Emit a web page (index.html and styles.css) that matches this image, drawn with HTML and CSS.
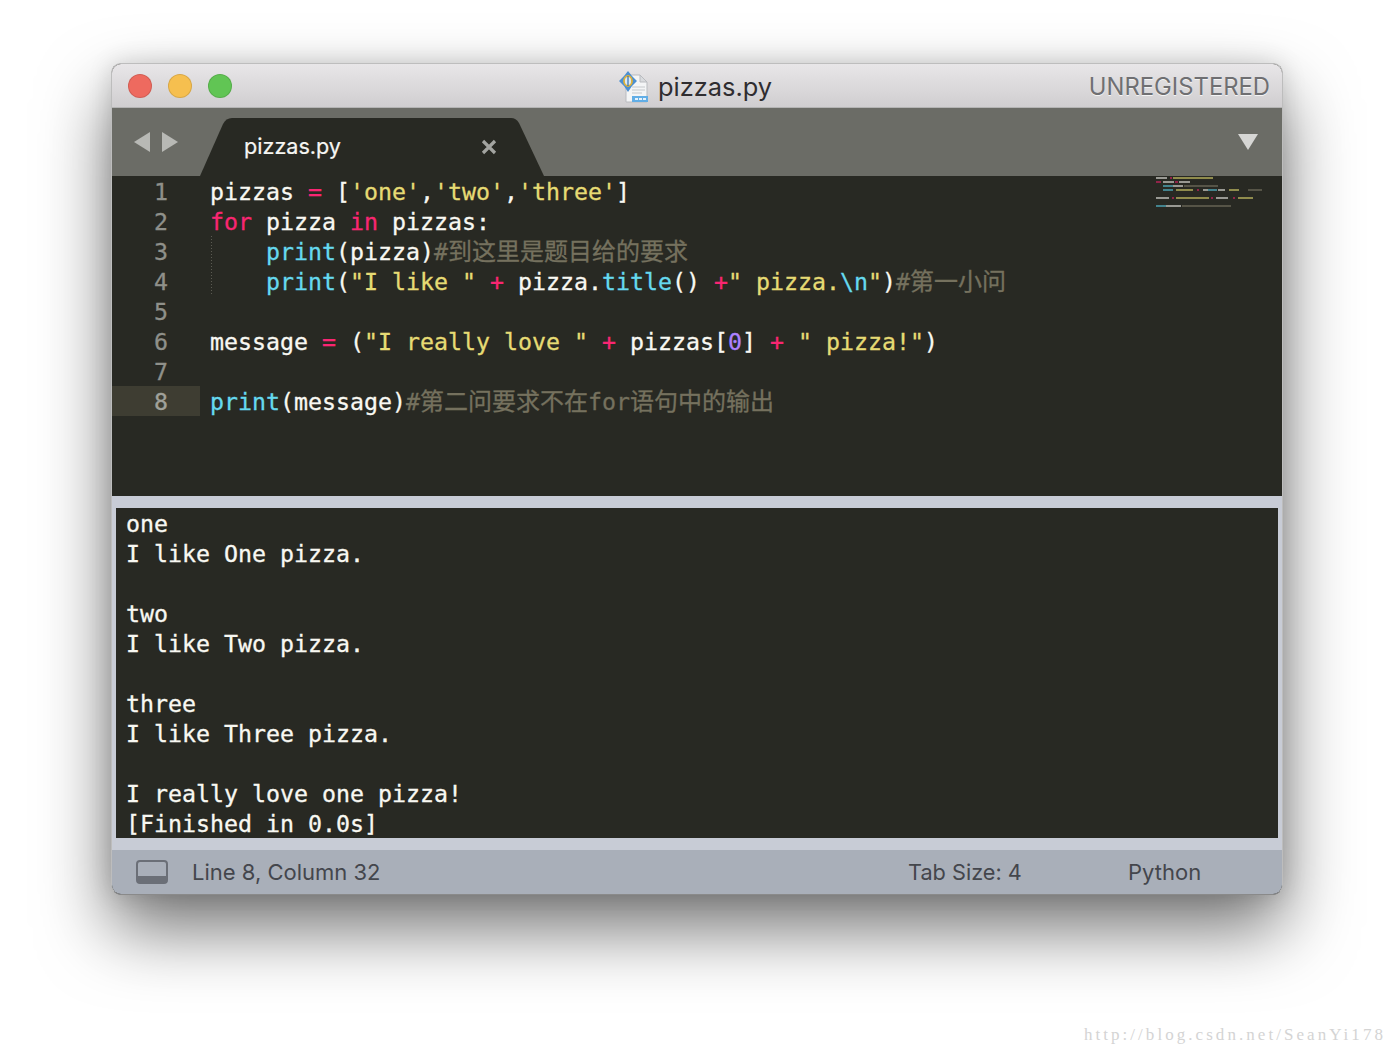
FILE: index.html
```html
<!DOCTYPE html>
<html lang="en">
<head>
<meta charset="utf-8">
<title>pizzas.py</title>
<link rel="stylesheet" href="styles.css">
</head>
<body>
<div class="window">
  <header class="titlebar">
    <div class="lights">
      <span class="light red"></span><span class="light yellow"></span><span class="light green"></span>
    </div>
    <div class="title">
      <svg class="file-icon" width="34" height="34" viewBox="0 0 34 34">
        <path d="M9 5h14l7 7v20H9z" fill="#f4f5f6" stroke="#b9bbbf"/>
        <path d="M23 5v7h7z" fill="#d9dbde" stroke="#b9bbbf"/>
        <path d="M15 17h13M15 20h13M15 23h10" stroke="#d5d7da" stroke-width="1.5"/>
        <rect x="15" y="26" width="16" height="6" fill="#62aee6"/>
        <path d="M18 29h11" stroke="#e6f2fb" stroke-width="2" stroke-dasharray="3 1"/>
        <path d="M11 1l4 5 5 5-5 5-4 6-4-6-5-5 5-5z" fill="#4b8fd2"/>
        <ellipse cx="11" cy="11" rx="4" ry="5" fill="#dbe8f2" stroke="#dfb23a" stroke-width="1.800"/>
        <path d="M11 6v10" stroke="#2f6fb0" stroke-width="1.200"/>
      </svg>
      <span class="title-text">pizzas.py</span>
    </div>
    <span class="unregistered">UNREGISTERED</span>
  </header>

  <nav class="tabbar">
    <div class="nav-arrows">
      <svg width="16" height="20" viewBox="0 0 16 20"><path d="M16 0v20L0 10z" fill="#b8b9b5"/></svg>
      <svg width="16" height="20" viewBox="0 0 16 20"><path d="M0 0v20l16-10z" fill="#b8b9b5"/></svg>
    </div>
    <div class="tab">
      <span class="tab-name">pizzas.py</span>
      <svg class="tab-close" width="16" height="16" viewBox="0 0 16 16"><path d="M2 2l12 12M14 2L2 14" stroke="#a3a4a0" stroke-width="3.200"/></svg>
    </div>
    <svg class="tab-menu" width="20" height="16" viewBox="0 0 20 16"><path d="M0 0h20L10 16z" fill="#d6d6d4"/></svg>
  </nav>

  <main class="editor">
    <div class="gutter">
      <div class="ln">1</div><div class="ln">2</div><div class="ln">3</div><div class="ln">4</div>
      <div class="ln">5</div><div class="ln">6</div><div class="ln">7</div><div class="ln current">8</div>
    </div>
    <div class="code">
      <div class="line">pizzas <b class="kw">=</b> [<b class="str">'one'</b>,<b class="str">'two'</b>,<b class="str">'three'</b>]</div>
      <div class="line"><b class="kw">for</b> pizza <b class="kw">in</b> pizzas:</div>
      <div class="line guide">    <b class="fn">print</b>(pizza)<b class="cm">#<i>到这里是题目给的要求</i></b></div>
      <div class="line guide">    <b class="fn">print</b>(<b class="str">"I like "</b> <b class="kw">+</b> pizza.<b class="fn">title</b>() <b class="kw">+</b><b class="str">" pizza.</b><b class="fn">\n</b><b class="str">"</b>)<b class="cm">#<i>第一小问</i></b></div>
      <div class="line"></div>
      <div class="line">message <b class="kw">=</b> (<b class="str">"I really love "</b> <b class="kw">+</b> pizzas[<b class="num">0</b>] <b class="kw">+</b> <b class="str">" pizza!"</b>)</div>
      <div class="line"></div>
      <div class="line"><b class="fn">print</b>(message)<b class="cm">#<i>第二问要求不在</i>for<i>语句中的输出</i></b></div>
    </div>
    <svg class="minimap" width="110" height="36" viewBox="0 0 110 36" aria-hidden="true">
      <g fill="#c9c9c3"><rect x="0" y="0" width="11" height="2"/><rect x="7" y="4" width="11" height="2"/><rect x="23" y="4" width="11" height="2"/><rect x="17" y="8" width="10" height="2"/><rect x="47" y="12" width="12" height="2"/><rect x="62" y="12" width="7" height="2"/><rect x="0" y="20" width="13" height="2"/><rect x="60" y="20" width="12" height="2"/><rect x="10" y="28" width="15" height="2"/></g>
      <g fill="#bdb660"><rect x="17" y="0" width="40" height="2"/><rect x="20" y="12" width="17" height="2"/><rect x="73" y="12" width="10" height="2"/><rect x="20" y="20" width="33" height="2"/><rect x="82" y="20" width="15" height="2"/></g>
      <g fill="#c0225a"><rect x="0" y="4" width="5" height="2"/><rect x="19" y="4" width="3" height="2"/><rect x="14" y="0" width="2" height="2"/><rect x="41" y="12" width="2" height="2"/><rect x="16" y="20" width="2" height="2"/><rect x="55" y="20" width="2" height="2"/><rect x="77" y="20" width="2" height="2"/></g>
      <g fill="#4fa9ba"><rect x="7" y="8" width="10" height="2"/><rect x="7" y="12" width="10" height="2"/><rect x="52" y="12" width="9" height="2"/><rect x="0" y="28" width="10" height="2"/></g>
      <g fill="#6a6757"><rect x="28" y="8" width="34" height="2"/><rect x="92" y="12" width="14" height="2"/><rect x="26" y="28" width="49" height="2"/></g>
    </svg>
  </main>

  <div class="panel-wrap">
    <pre class="output">one
I like One pizza.

two
I like Two pizza.

three
I like Three pizza.

I really love one pizza!
[Finished in 0.0s]</pre>
  </div>

  <footer class="statusbar">
    <svg class="panel-icon" width="32" height="24" viewBox="0 0 32 24">
      <rect x="1" y="1" width="30" height="22" rx="3" fill="none" stroke="#6b6f77" stroke-width="2"/>
      <path d="M1 16h30v4a3 3 0 0 1-3 3H4a3 3 0 0 1-3-3z" fill="#6b6f77"/>
    </svg>
    <span class="status-pos">Line 8, Column 32</span>
    <span class="status-tab">Tab Size: 4</span>
    <span class="status-lang">Python</span>
  </footer>
</div>
<div class="watermark">http://blog.csdn.net/SeanYi178</div>
</body>
</html>
```
FILE: styles.css
```css
html, body {
  margin: 0;
  padding: 0;
  background: #fff;
  height: 1054px;
  overflow: hidden;
}
body {
  position: relative;
  padding-top: 63px;
  box-sizing: border-box;
  font-family: Inter, "Liberation Sans", sans-serif;
}
.window {
  width: 1172px;
  height: 832px;
  margin-left: 111px;
  box-sizing: border-box;
  border: 1px solid #bdbdbd;
  border-bottom-color: #8a8a8a;
  border-radius: 10px;
  overflow: hidden;
  display: flex;
  flex-direction: column;
  box-shadow: 0 34px 70px rgba(0, 0, 0, .55), 0 0 24px rgba(0, 0, 0, .14);
  background: #282923;
}
.titlebar {
  height: 44px;
  flex: none;
  box-sizing: border-box;
  border-bottom: 1px solid #b4b4b4;
  background: linear-gradient(#e8e6e8, #d0ced0);
  display: flex;
  align-items: center;
  position: relative;
}
.lights {
  display: flex;
  gap: 16px;
  margin-left: 16px;
}
.light {
  width: 24px;
  height: 24px;
  border-radius: 50%;
  box-sizing: border-box;
  border: 1px solid rgba(0, 0, 0, .12);
}
.red { background: #ee6a5f; }
.yellow { background: #f6bf4f; }
.green { background: #61c554; }
.title {
  position: absolute;
  left: 505px;
  top: 5px;
  display: flex;
  align-items: center;
  gap: 7px;
}
.file-icon { display: block; flex: none; }
.title-text {
  font-size: 25.400px;
  line-height: 36px;
  color: #2f2d30;
}
.unregistered {
  margin-left: auto;
  margin-right: 12px;
  font-size: 23.800px;
  color: #6f6f72;
  text-shadow: 0 1px 0 #f4f4f4;
  position: relative;
  top: 1px;
}
.tabbar {
  height: 68px;
  flex: none;
  background: #6b6c66;
  display: flex;
  align-items: flex-end;
  position: relative;
}
.nav-arrows {
  display: flex;
  gap: 12px;
  position: absolute;
  left: 22px;
  top: 24px;
}
.tab {
  margin-left: 88px;
  width: 344px;
  height: 58px;
  background: #282923;
  clip-path: path("M0 58 L23 6 Q26 0 32 0 L311 0 Q316 0 319 5 L344 58 Z");
  display: flex;
  align-items: center;
  box-sizing: border-box;
  padding: 0 47px 2px 44px;
}
.tab-name {
  font-size: 21.600px;
  color: #f6f6f3;
  flex: 1;
  -webkit-text-stroke: .2px;
}
.tab-close { flex: none; margin-top: 2px; }
.tab-menu {
  position: absolute;
  right: 24px;
  top: 26px;
}
.editor {
  height: 320px;
  flex: none;
  background: #282923;
  display: flex;
  position: relative;
  font-family: "DejaVu Sans Mono", monospace;
  font-size: 23.250px;
  line-height: 32px;
  color: #f8f8f2;
  -webkit-text-stroke: .3px;
}
.gutter {
  width: 88px;
  flex: none;
}
.ln {
  height: 30px;
  box-sizing: border-box;
  padding-right: 32px;
  text-align: right;
  color: #8f908a;
}
.current { background: #3e3d32; color: #a0a19a; }
.code {
  margin-left: 10px;
  flex: 1;
}
.line {
  height: 30px;
  white-space: pre;
  position: relative;
}
.line b, .line i { font-weight: normal; font-style: normal; }
.guide {
  background: repeating-linear-gradient(#5b5b52 0 1px, transparent 1px 3px) 1px 0 / 1px 100% no-repeat;
}
.kw { color: #f92672; }
.str { color: #e6db74; }
.fn { color: #66d9ef; }
.num { color: #ae81ff; }
.cm { color: #75715e; }
.cm i {
  font-family: "Noto Sans CJK SC", sans-serif;
  font-size: 24px;
  line-height: 0;
}
.minimap {
  position: absolute;
  left: 1044px;
  top: 1px;
  opacity: .7;
  filter: blur(.5px);
}
.panel-wrap {
  flex: none;
  height: 354px;
  box-sizing: border-box;
  background: #c8ccd6;
  padding: 12px 4px;
}
.output {
  margin: 0;
  height: 330px;
  overflow: hidden;
  box-sizing: border-box;
  padding: 1px 0 0 10px;
  background: #282923;
  color: #f8f8f2;
  font-family: "DejaVu Sans Mono", monospace;
  font-size: 23.250px;
  line-height: 30px;
  -webkit-text-stroke: .3px;
}
.statusbar {
  flex: 1;
  background: #a9afb9;
  display: flex;
  align-items: center;
  color: #44464c;
  font-size: 22px;
  position: relative;
  padding-bottom: 1px;
  box-sizing: border-box;
}
.panel-icon { margin-left: 24px; flex: none; }
.status-pos { margin-left: 24px; }
.status-tab { position: absolute; left: 796px; font-size: 21.700px; }
.status-lang { position: absolute; left: 1016px; }
.watermark {
  position: absolute;
  right: 8px;
  bottom: 9px;
  font-family: "Liberation Serif", serif;
  font-size: 17px;
  letter-spacing: 3.050px;
  line-height: 20px;
  color: #d4d4d4;
}
```
